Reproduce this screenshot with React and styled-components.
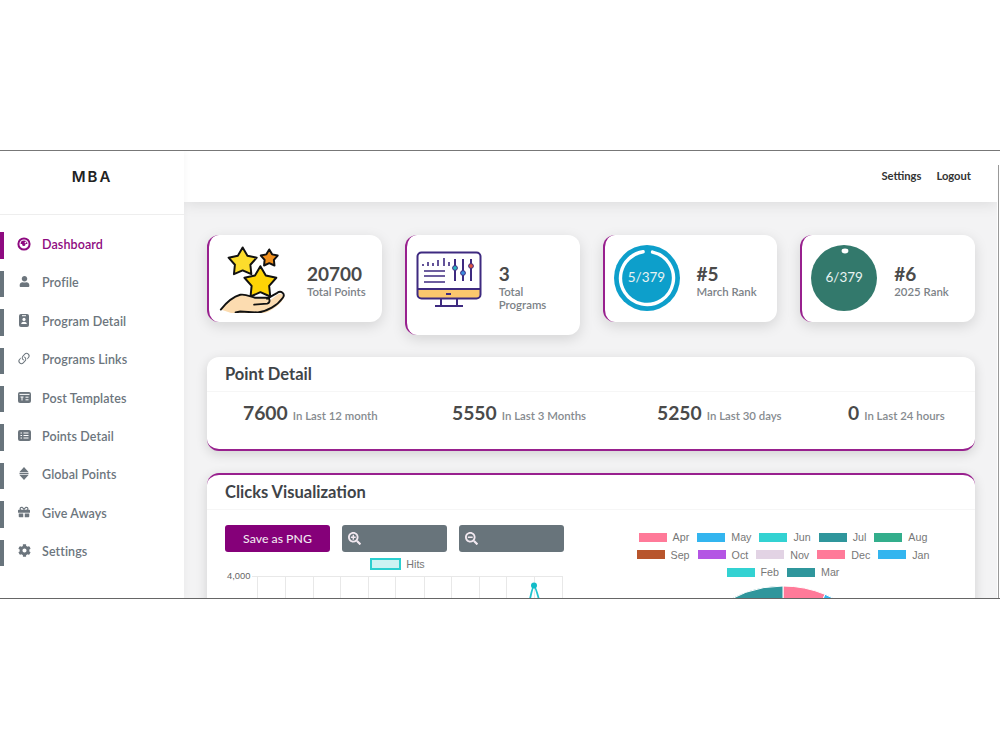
import React from "react";
import styled, { createGlobalStyle } from "styled-components";
import { FaUser, FaGift, FaCog, FaSearchPlus, FaSearchMinus } from "react-icons/fa";
import { BsLink45Deg } from "react-icons/bs";

const GlobalStyle = createGlobalStyle`
  html, body { margin: 0; background: #fff; }
  body { font-family: "Lato", "Noto Sans", sans-serif; color: #454545; }
  * { box-sizing: border-box; }
`;

const Frame = styled.div`
  margin-top: 150px;
  height: 449px;
  display: flex;
  overflow: hidden;
  border-top: 1px solid #777;
  border-bottom: 1px solid #666;
  background: #fff;
`;

const Sidebar = styled.aside`
  width: 184px;
  flex: none;
  background: #fff;
  box-shadow: 0 0 8px rgba(0, 0, 0, 0.05);
  z-index: 2;
`;

const Logo = styled.div`
  height: 64px;
  border-bottom: 1px solid #eee;
  display: flex;
  align-items: center;
  justify-content: center;
  padding-bottom: 12px;
  font-family: "Inter", sans-serif;
  font-size: 15px;
  font-weight: 600;
  letter-spacing: 2px;
  color: #222;
`;

const Menu = styled.nav`
  padding-top: 17.4px;
  display: flex;
  flex-direction: column;
  gap: 12px;
`;

const MenuItem = styled.a`
  height: 26.4px;
  display: flex;
  align-items: center;
  border-left: 4px solid ${(p) => (p.$active ? "#8e0a80" : "#68747c")};
  padding: 0 0 2px 15px;
  gap: 13px;
  font-size: 12.5px;
  font-weight: 600;
  letter-spacing: 0.1px;
  color: ${(p) => (p.$active ? "#8e0a80" : "#6c757d")};
`;

const MenuIcon = styled.span`
  width: 10px;
  height: 14px;
  margin-top: -2px;
  display: flex;
  align-items: center;
  justify-content: center;
  svg { flex: none; }
`;

const Right = styled.div`
  flex: 1;
  min-width: 0;
  background: #f3f3f4;
`;

const Topbar = styled.header`
  height: 51px;
  background: #fff;
  display: flex;
  align-items: center;
  justify-content: flex-end;
  gap: 15px;
  padding: 0 26px 2px 0;
  box-shadow: 0 2px 14px rgba(0, 0, 0, 0.1);
  font-size: 11.2px;
  font-weight: 700;
  color: #333;
`;

const ScrollStrip = styled.div`
  width: 3px;
  flex: none;
  background: #fff;
  padding: 14px 0 0 1px;
  &::before {
    content: "";
    display: block;
    width: 1px;
    height: 100%;
    background: #999;
  }
`;

const Content = styled.main`
  padding: 33px 22px 0 23px;
  display: flex;
  flex-direction: column;
  gap: 22px;
`;

const StatGrid = styled.div`
  display: grid;
  grid-template-columns: repeat(4, 1fr);
  gap: 23px;
  align-items: start;
`;

const StatCard = styled.div`
  display: flex;
  gap: ${(p) => p.$gap || 17}px;
  padding: 10px 10px 10px 9px;
  background: #fff;
  border-left: 2px solid #98208e;
  border-radius: 12px;
  box-shadow: 0 4px 14px rgba(0, 0, 0, 0.13);
`;

const StatSlot = styled.div`
  width: ${(p) => p.$w || 66}px;
  height: 66px;
  flex: none;
  display: flex;
  align-items: flex-start;
  justify-content: center;
`;

const StatText = styled.div`
  padding: 17px 0 14px;
`;

const StatValue = styled.div`
  font-size: 19px;
  line-height: 23px;
  font-weight: 700;
  color: #4a4a4a;
`;

const StatLabel = styled.div`
  font-size: 11.4px;
  line-height: 13px;
  font-weight: 600;
  color: #7c8287;
`;

const Badge = styled.div`
  position: relative;
  width: 66px;
  height: 66px;
  padding-bottom: 3px;
  border-radius: 50%;
  background: ${(p) => p.$color};
  display: flex;
  align-items: center;
  justify-content: center;
  color: #e8f3f2;
  font-size: 13.5px;
  svg { position: absolute; inset: 0; }
`;

const Panel = styled.section`
  background: #fff;
  border-radius: 12px;
  border-${(p) => p.$edge}: 2px solid #98208e;
  box-shadow: 0 3px 12px rgba(0, 0, 0, 0.14);
`;

const PanelHead = styled.h2`
  margin: 0;
  height: 35px;
  padding: 0 18px 1px;
  display: flex;
  align-items: center;
  font-size: 16.5px;
  font-weight: 700;
  color: #3f4448;
  border-bottom: 1px solid #f6f6f6;
`;

const Points = styled.div`
  height: 57px;
  padding: 9px 0 0 36px;
  display: grid;
  grid-template-columns: 209px 205px 191px auto;
  align-items: start;
`;

const Point = styled.div`
  display: flex;
  align-items: baseline;
  gap: 5px;
  font-size: 11.4px;
  font-weight: 600;
  color: #868b8f;
  b {
    font-size: 19.3px;
    font-weight: 700;
    color: #4a4a4a;
  }
`;

const ChartGrid = styled.div`
  display: grid;
  grid-template-columns: 1fr 348px;
  gap: 20px;
  padding: 15px 18px 0;
`;

const ChartTools = styled.div`
  display: flex;
  gap: 12px;
`;

const ToolButton = styled.button`
  width: 105px;
  height: 27px;
  border: 0;
  border-radius: 3px;
  padding: 0 6px;
  display: flex;
  align-items: center;
  justify-content: ${(p) => (p.$primary ? "center" : "flex-start")};
  background: ${(p) => (p.$primary ? "#850079" : "#68747b")};
  color: #f1e8f0;
  font-family: inherit;
  font-size: 12.3px;
  font-weight: 500;
`;

const HitsLegend = styled.div`
  display: flex;
  justify-content: center;
  align-items: center;
  gap: 5px;
  margin: 5px 0 0 -19px;
  height: 13px;
  font-family: "Liberation Sans", sans-serif;
  font-size: 10.7px;
  color: #777;
  i {
    width: 31px;
    height: 12px;
    border: 2px solid #2ccfd0;
    background: #cdf3f3;
  }
`;

const LineChart = styled.svg`
  display: block;
  margin-top: -1px;
`;

const PieLegend = styled.div`
  display: flex;
  flex-wrap: wrap;
  justify-content: center;
  gap: 5px 8px;
  padding-top: 6px;
  margin: 0 12px;
`;

const LegendItem = styled.div`
  display: flex;
  align-items: center;
  gap: 6px;
  height: 12.5px;
  font-family: "Liberation Sans", sans-serif;
  font-size: 10.7px;
  color: #777;
  i {
    width: 28px;
    height: 9px;
    background: ${(p) => p.$color};
  }
`;

const Pie = styled.svg`
  display: block;
  margin: 5px auto 0;
`;

const Gauge = () => (
  <svg width="14" height="14" viewBox="0 0 14 14" fill="none">
    <circle cx="7" cy="7" r="5.6" stroke="#8e0a80" strokeWidth="2" />
    <path d="M3.6 7a3.4 3.4 0 0 1 6.8 0z" fill="#8e0a80" />
    <path d="M6.4 7.6 9.6 4.4" stroke="#fff" strokeWidth="1.2" />
    <circle cx="6.8" cy="7.4" r="1.6" fill="#8e0a80" />
  </svg>
);

const IdCard = () => (
  <svg width="10" height="13" viewBox="0 0 10 13">
    <rect width="10" height="13" rx="2" fill="#6c757d" />
    <rect x="3" y="1.2" width="4" height="1" fill="#fff" />
    <circle cx="5" cy="5.4" r="1.6" fill="#fff" />
    <path d="M2.2 10c0-3 5.6-3 5.6 0z" fill="#fff" />
  </svg>
);

const TemplateIcon = () => (
  <svg width="13" height="11" viewBox="0 0 13 11">
    <rect width="13" height="11" rx="2" fill="#6c757d" />
    <path d="M1.5 2.4h10" stroke="#fff" />
    <path d="M2.5 5h3M4 5v3.5M7.5 5.2h3M7.5 7.8h3" stroke="#fff" />
  </svg>
);

const ListIcon = () => (
  <svg width="13" height="11" viewBox="0 0 13 11">
    <rect width="13" height="11" rx="2" fill="#6c757d" />
    <path d="M2.5 3h1.5M5.5 3h5M2.5 5.5h1.5M5.5 5.5h5M2.5 8h1.5M5.5 8h5" stroke="#fff" />
  </svg>
);

const GlobalIcon = () => (
  <svg width="12" height="13" viewBox="0 0 12 13" fill="#6c757d">
    <path d="M6 0 10.5 5h-9zM1.5 8h9L6 13z" />
    <rect x="1.5" y="5.7" width="9" height="1.6" />
  </svg>
);

const StarShape = ({ cx, cy, r, fill }) => {
  const pts = [];
  for (let i = 0; i < 10; i++) {
    const rad = i % 2 ? r * 0.55 : r;
    const a = (Math.PI / 5) * i - Math.PI / 2;
    pts.push(`${cx + rad * Math.cos(a)},${cy + rad * Math.sin(a)}`);
  }
  return <polygon points={pts.join(" ")} fill={fill} stroke="#111" strokeWidth="2" strokeLinejoin="round" />;
};

const StarsHand = () => (
  <svg width="70" height="68" viewBox="0 0 70 68" fill="none">
    <StarShape cx={25} cy={17} r={15} fill="#fcdc2c" />
    <StarShape cx={52} cy={13} r={9} fill="#f0901e" />
    <StarShape cx={43} cy={38} r={17} fill="#fed406" />
    <g transform="scale(.94 1)">
      <path d="M3 65c6-7 13-13 21-15 6-1 11 2 16 3h13c3 0 4 5 0 6l-3 1 14-10c4-3 9 1 6 5-6 8-17 14-27 15l-17 1-4 0z" fill="#fcdcb0" />
      <path d="M3 65c6-7 13-13 21-15 6-1 11 2 16 3h13c3 0 4 5 0 6l-14 1M53 54l11-6c4-3 9 1 6 5-6 8-17 14-27 15l-19-1-5 1" stroke="#111" strokeWidth="2" strokeLinecap="round" />
    </g>
  </svg>
);

const Monitor = () => (
  <svg width="66" height="58" viewBox="0 0 66 58" fill="none" style={{ marginTop: 6 }}>
    <path d="M2 38h62v6a3 3 0 0 1-3 3H5a3 3 0 0 1-3-3z" fill="#fbc76d" />
    <rect x="1.5" y="1.5" width="63" height="46" rx="4" stroke="#3e2a80" strokeWidth="2" />
    <path d="M2 38h62M25 47v8M41 47v8M19 55h28" stroke="#3e2a80" strokeWidth="2" />
    <path d="M30 43h5" stroke="#3e2a80" strokeWidth="2" />
    <path d="M7 13v2M12 11v4M17 12v3M22 9v6M28 7v8M33 11v4" stroke="#3e2a80" strokeWidth="1.6" />
    <path d="M8 20h21M8 25h21M8 31h21" stroke="#3e2a80" strokeWidth="1.6" />
    <path d="M39 8v22M47 8v22M55 8v22" stroke="#3e2a80" strokeWidth="2" />
    <circle cx="39" cy="17" r="2.4" fill="#2ab5c0" stroke="#3e2a80" />
    <circle cx="47" cy="22" r="2.4" fill="#3d8fe0" stroke="#3e2a80" />
    <circle cx="55" cy="15" r="2.4" fill="#e2553f" stroke="#3e2a80" />
  </svg>
);

const menu = [
  { label: "Dashboard", icon: <Gauge />, active: true },
  { label: "Profile", icon: <FaUser size={11} color="#6c757d" /> },
  { label: "Program Detail", icon: <IdCard /> },
  { label: "Programs Links", icon: <BsLink45Deg size={16} color="#6c757d" /> },
  { label: "Post Templates", icon: <TemplateIcon /> },
  { label: "Points Detail", icon: <ListIcon /> },
  { label: "Global Points", icon: <GlobalIcon /> },
  { label: "Give Aways", icon: <FaGift size={12} color="#6c757d" /> },
  { label: "Settings", icon: <FaCog size={13} color="#6c757d" /> },
];

const points = [
  ["7600", "In Last 12 month"],
  ["5550", "In Last 3 Months"],
  ["5250", "In Last 30 days"],
  ["0", "In Last 24 hours"],
];

const months = [
  ["Apr", "#ff7a99"], ["May", "#33b5ef"], ["Jun", "#33d2d2"], ["Jul", "#2f969c"], ["Aug", "#33ae8c"],
  ["Sep", "#b8552c"], ["Oct", "#b455e4"], ["Nov", "#e2d3e4"], ["Dec", "#ff7a99"], ["Jan", "#33b5ef"],
  ["Feb", "#33d2d2"], ["Mar", "#2f969c"],
];

const gridX = [32, 60, 88, 115, 143, 170, 199, 226, 254, 281, 309, 337];

export default function App() {
  return (
    <>
      <GlobalStyle />
      <Frame>
        <Sidebar>
          <Logo>MBA</Logo>
          <Menu>
            {menu.map((m) => (
              <MenuItem key={m.label} $active={m.active}>
                <MenuIcon>{m.icon}</MenuIcon>
                {m.label}
              </MenuItem>
            ))}
          </Menu>
        </Sidebar>
        <Right>
          <Topbar>
            <span>Settings</span>
            <span>Logout</span>
          </Topbar>
          <Content>
            <StatGrid>
              <StatCard $gap={20}>
                <StatSlot $w={69}><StarsHand /></StatSlot>
                <StatText>
                  <StatValue>20700</StatValue>
                  <StatLabel>Total Points</StatLabel>
                </StatText>
              </StatCard>
              <StatCard>
                <StatSlot><Monitor /></StatSlot>
                <StatText>
                  <StatValue>3</StatValue>
                  <StatLabel>Total<br />Programs</StatLabel>
                </StatText>
              </StatCard>
              <StatCard>
                <StatSlot>
                  <Badge $color="#0d9fcb">
                    <svg width="66" height="66" viewBox="0 0 66 66" fill="none">
                      <circle cx="33" cy="33" r="26.5" stroke="#fff" strokeWidth="3.4" strokeLinecap="round" strokeDasharray="156 11" transform="rotate(-78 33 33)" />
                    </svg>
                    5/379
                  </Badge>
                </StatSlot>
                <StatText>
                  <StatValue>#5</StatValue>
                  <StatLabel>March Rank</StatLabel>
                </StatText>
              </StatCard>
              <StatCard>
                <StatSlot>
                  <Badge $color="#33796c">
                    <svg width="66" height="66" viewBox="0 0 66 66">
                      <ellipse cx="34" cy="6" rx="3.4" ry="2.4" fill="#fff" />
                    </svg>
                    6/379
                  </Badge>
                </StatSlot>
                <StatText>
                  <StatValue>#6</StatValue>
                  <StatLabel>2025 Rank</StatLabel>
                </StatText>
              </StatCard>
            </StatGrid>

            <Panel $edge="bottom">
              <PanelHead>Point Detail</PanelHead>
              <Points>
                {points.map(([n, t]) => (
                  <Point key={t}>
                    <b>{n}</b>
                    {t}
                  </Point>
                ))}
              </Points>
            </Panel>

            <Panel $edge="top">
              <PanelHead>Clicks Visualization</PanelHead>
              <ChartGrid>
                <div>
                  <ChartTools>
                    <ToolButton $primary>Save as PNG</ToolButton>
                    <ToolButton><FaSearchPlus size={13} /></ToolButton>
                    <ToolButton><FaSearchMinus size={13} /></ToolButton>
                  </ChartTools>
                  <HitsLegend><i />Hits</HitsLegend>
                  <LineChart width="345" height="60" viewBox="0 0 345 60" fill="none">
                    <text x="2" y="10" fontFamily="Liberation Sans" fontSize="9.4" fill="#666">4,000</text>
                    <path d="M27 7.5H337" stroke="#e8e8e8" />
                    {gridX.map((x) => (
                      <path key={x} d={`M${x}.5 7V60`} stroke="#e8e8e8" />
                    ))}
                    <path d="M303 38C306 27 307 18 309 17C311 18 313 27 316 38" stroke="#1fc4cf" strokeWidth="1.8" />
                    <circle cx="309" cy="16.5" r="3" fill="#12bcc8" />
                  </LineChart>
                </div>
                <div>
                  <PieLegend>
                    {months.map(([m, c]) => (
                      <LegendItem key={m} $color={c}><i />{m}</LegendItem>
                    ))}
                  </PieLegend>
                  <Pie width="240" height="40" viewBox="-120 -112 240 40">
                    <path d="M0 -110A110 110 0 0 1 42 -101.7L0 0z" fill="#ff7a99" stroke="#fff" />
                    <path d="M42 -101.7A110 110 0 0 1 62 -90.8L0 0z" fill="#33b5ef" stroke="#fff" />
                    <path d="M0 -110A110 110 0 0 0 -70 -84.8L0 0z" fill="#2f969c" stroke="#fff" />
                  </Pie>
                </div>
              </ChartGrid>
            </Panel>
          </Content>
        </Right>
        <ScrollStrip />
      </Frame>
    </>
  );
}
